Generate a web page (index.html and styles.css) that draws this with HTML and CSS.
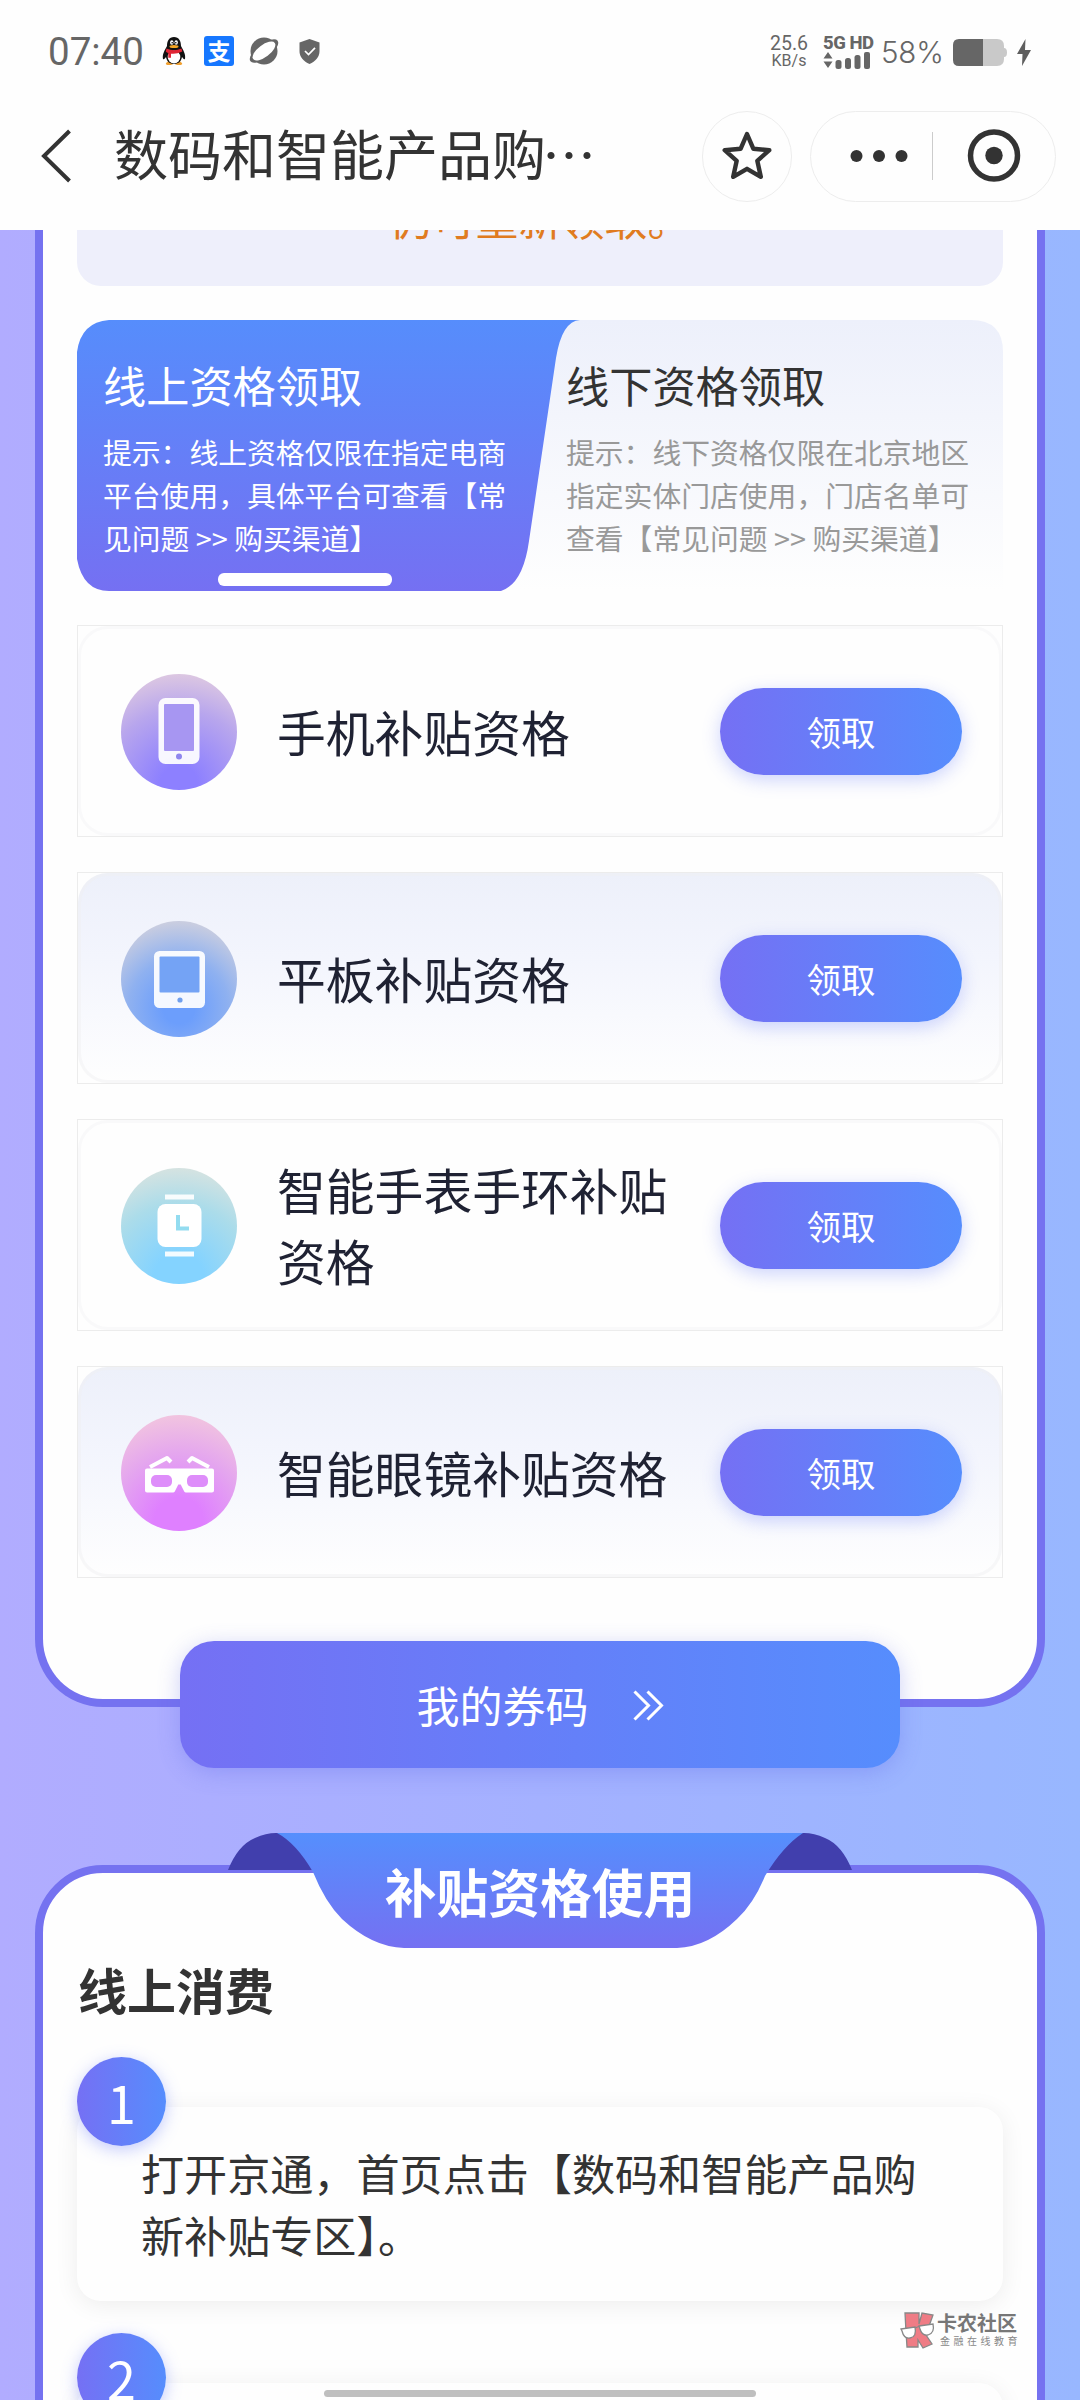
FILE: index.html
```html
<!DOCTYPE html>
<html lang="zh-CN">
<head>
<meta charset="utf-8">
<title>数码和智能产品购新补贴专区</title>
<link rel="stylesheet" href="styles.css">
</head>
<body>
<div class="phone">
  <header class="top">
    <div class="status">
      <span class="clock">07:40</span>
      <svg class="qq" width="26" height="30" viewBox="0 0 26 30">
        <path d="M5 27q-1 2 3 2t5-2q1 2 5 2t3-2l-4-3H9z" fill="#f0a030"/>
        <path d="M13 1c-5 0-7 4-7 9-2 4-5 8-4 13 1 1 2-1 3-2 1 5 4 7 8 7s7-2 8-7c1 1 2 3 3 2 1-5-2-9-4-13 0-5-2-9-7-9z" fill="#111"/>
        <ellipse cx="13" cy="21" rx="6.3" ry="6.5" fill="#fff"/>
        <ellipse cx="10.8" cy="6.5" rx="1.7" ry="2.3" fill="#fff"/><ellipse cx="15.2" cy="6.5" rx="1.7" ry="2.3" fill="#fff"/>
        <circle cx="11.2" cy="6.8" r=".8"/><circle cx="14.8" cy="6.8" r=".8"/>
        <ellipse cx="13" cy="10.6" rx="4.5" ry="1.5" fill="#f5a623"/>
        <path d="M5.5 12.500q7.500 3.500 15 0l.8 3q-6 3-11.300 2.200v4H7.300v-4.600q-1.500-.600-2.500-1.600z" fill="#e02535"/>
      </svg>
      <span class="alipay">支</span>
      <svg class="planet" width="30" height="30" viewBox="0 0 30 30">
        <circle cx="15" cy="15" r="13.500" fill="#666"/>
        <ellipse cx="15" cy="15" rx="17" ry="7" transform="rotate(-37 15 15)" fill="#666"/>
        <ellipse cx="15" cy="15" rx="13.500" ry="6" transform="rotate(-37 15 15)" fill="#fff"/>
      </svg>
      <svg class="shield" width="21" height="25" viewBox="0 0 21 25">
        <path d="M10.500 0l10 3.500V12c0 6-4 10.500-10 13-6-2.500-10-7-10-13V3.500z" fill="#666"/>
        <path d="M6 12l3.500 3.500L16 8.800" fill="none" stroke="#fff" stroke-width="1.700"/>
      </svg>
      <span class="grow"></span>
      <span class="speed"><b>25.6</b><i>KB/s</i></span>
      <span class="net"><b>5G HD</b>
        <svg width="48" height="17" viewBox="0 0 48 17" fill="#666">
          <path d="M5 0l4.500 6.500h-9zM5 16l4.500-6.500h-9z"/>
          <rect x="12.500" y="8" width="6" height="9" rx="2.500"/><rect x="22" y="6" width="6" height="11" rx="2.500"/><rect x="31.500" y="3" width="6" height="14" rx="2.500"/><rect x="41" y="0" width="6" height="17" rx="2"/>
        </svg>
      </span>
      <span class="percent">58%</span>
      <svg class="battery" width="54" height="27" viewBox="0 0 54 27">
        <path d="M6 0h38q7 0 7 7v2q3 0 3 4.500t-3 4.500v2q0 7-7 7H6z" fill="#c9c9c9"/>
        <path d="M6 0h24v27H6q-6 0-6-6V6q0-6 6-6z" fill="#666"/>
      </svg>
      <svg width="14" height="27" viewBox="0 0 14 27"><path d="M8.500 0L0 15h5.500L5 27 14 11H8z" fill="#5e5e5e"/></svg>
    </div>
    <nav class="nav">
      <svg class="back" width="32" height="54" viewBox="0 0 32 54"><path d="M29.500 2L4 27l25.500 25" fill="none" stroke="#333" stroke-width="4"/></svg>
      <h1>数码和智能产品购<span class="more">…</span></h1>
      <span class="fav">
        <svg width="54" height="54" viewBox="0 0 54 54"><path d="M27 5l6.300 14.700 16 1.500-12 10.600 3.500 16L27 39.800l-13.800 8 3.500-16-12-10.600 16-1.500z" fill="none" stroke="#333" stroke-width="4.400" stroke-linejoin="round"/></svg>
      </span>
      <span class="capsule">
        <svg width="246" height="90" viewBox="0 0 246 90" fill="#333">
          <circle cx="46.500" cy="45" r="6"/><circle cx="69" cy="45" r="6"/><circle cx="91.500" cy="45" r="6"/>
          <path d="M122.500 21v48" stroke="#ccc"/>
          <circle cx="184" cy="44.500" r="23.500" fill="none" stroke="#333" stroke-width="5.500"/><circle cx="184" cy="44.500" r="8.700"/>
        </svg>
      </span>
    </nav>
  </header>

  <main class="page">
    <section class="panel claim">
      <div class="notice">仍可重新领取。</div>
      <div class="tabs">
        <svg class="tab-shape" width="926" height="271" viewBox="0 0 926 271">
          <defs>
            <linearGradient id="tabOn" x2="0" y2="1"><stop stop-color="#568dfc"/><stop offset="1" stop-color="#7570f2"/></linearGradient>
            <linearGradient id="tabOff" x2="0" y2="1"><stop stop-color="#edf0fb"/><stop offset="1" stop-color="#fefefe"/></linearGradient>
          </defs>
          <path d="M420 0h474q32 0 32 32v239H420z" fill="url(#tabOff)"/>
          <path d="M32 0h471Q485 1 479 38L452 221q-6 43-28 50H32q-26 0-32-32V32Q4 2 32 0z" fill="url(#tabOn)"/>
        </svg>
        <div class="tab tab-on">
          <h2>线上资格领取</h2>
          <p>提示：线上资格仅限在指定电商平台使用，具体平台可查看【常见问题 &gt;&gt; 购买渠道】</p>
          <span class="tab-bar"></span>
        </div>
        <div class="tab">
          <h2>线下资格领取</h2>
          <p>提示：线下资格仅限在北京地区指定实体门店使用，门店名单可查看【常见问题 &gt;&gt; 购买渠道】</p>
        </div>
      </div>

      <div class="rows">
        <div class="row"><div class="row-in">
          <span class="ico phone-ico"><svg width="116" height="116" viewBox="0 0 116 116"><rect x="37.500" y="24" width="41" height="66" rx="7" fill="#fff" opacity=".93"/><rect x="43" y="30" width="30" height="47" rx="1" fill="#a796f2"/><circle cx="58" cy="82.500" r="3" fill="#8f86ee"/></svg></span>
          <span class="name">手机补贴资格</span><button>领取</button>
        </div></div>
        <div class="row tint"><div class="row-in">
          <span class="ico pad-ico"><svg width="116" height="116" viewBox="0 0 116 116"><rect x="33" y="30" width="51" height="57" rx="5.500" fill="#fff" opacity=".93"/><rect x="38.500" y="35.500" width="40" height="36" rx="1" fill="#74a3f5"/><circle cx="59" cy="79" r="2.600" fill="#709fed"/></svg></span>
          <span class="name">平板补贴资格</span><button>领取</button>
        </div></div>
        <div class="row"><div class="row-in">
          <span class="ico watch-ico"><svg width="116" height="116" viewBox="0 0 116 116"><path d="M44 26.500h29v5H44zM44 83.500h29v5H44z" fill="#fff" opacity=".9"/><rect x="36.500" y="36" width="44" height="43" rx="8" fill="#fff"/><path d="M57 47v13.500h11" fill="none" stroke="#93dcf0" stroke-width="4"/></svg></span>
          <span class="name">智能手表手环补贴资格</span><button>领取</button>
        </div></div>
        <div class="row tint"><div class="row-in">
          <span class="ico glass-ico"><svg width="116" height="116" viewBox="0 0 116 116" fill="none" stroke="#fff" stroke-width="4" stroke-linejoin="round"><path d="M26 55.500v20h26l4-8h5l4 8h26v-20z" fill="#fff"/><rect x="30" y="60" width="21" height="12" rx="5" fill="#de8dfa" stroke="none"/><rect x="66" y="60" width="21" height="12" rx="5" fill="#de8dfa" stroke="none"/><path d="M29 52l17-9 4 4M88 52l-17-9-4 4" stroke-width="4"/></svg></span>
          <span class="name">智能眼镜补贴资格</span><button>领取</button>
        </div></div>
      </div>
      <a class="coupon">我的券码
        <svg width="31" height="31" viewBox="0 0 31 31"><path d="M1.500 1.500l14 14-14 14M14.500 1.500l14 14-14 14" fill="none" stroke="#fff" stroke-width="3"/></svg>
      </a>
    </section>

    <section class="panel use">
      <div class="ribbon">
        <svg width="624" height="115" viewBox="0 0 624 115">
          <defs><linearGradient id="rib" x2="0" y2="1"><stop stop-color="#558ffd"/><stop offset="1" stop-color="#7570f2"/></linearGradient></defs>
          <path d="M0 37Q10 12 27 5 38 0 48 0h20l28 37zM624 37Q614 12 597 5 586 0 576 0h-20l-28 37z" fill="#413fad"/>
          <path d="M49 0h526q-20 13-38 43-11 27-28 43-29 28-60 29H176q-32-1-62-29Q97 69 85 39 68 10 49 0z" fill="url(#rib)"/>
        </svg>
        <h2>补贴资格使用</h2>
      </div>
      <h3>线上消费</h3>
      <div class="step"><span class="num">1</span><p>打开京通，首页点击【数码和智能产品购新补贴专区】。</p></div>
      <div class="step"><span class="num">2</span><p></p></div>
    </section>
  </main>

  <div class="mark">
    <svg width="35" height="36" viewBox="0 0 35 36" stroke="#888" stroke-width="1.300">
      <path d="M5 1h14v11L22 1l11 2-5 14-4 3 8 12-9 4-5-8v7H7L6 20z" fill="#ef7c85"/>
      <path d="M1 17l14-2q2 10-5 11-6 1-8-7zM19 14l14-2q2 9-5 11-6 1-8-6z" fill="#fff"/><path d="M15 16l5-2" fill="none"/>
    </svg>
    <span><b>卡农社区</b><i>金融在线教育</i></span>
  </div>
  <div class="home"></div>
</div>
</body>
</html>
```
FILE: styles.css
```css
* { box-sizing: border-box; }
body, h1, h2, h3, p { margin: 0; font-weight: 400; }
i { font-style: normal; }
svg { display: block; flex: none; overflow: visible; }
body { font-family: "Noto Sans CJK SC", sans-serif; color: #333; }

.phone {
  position: relative;
  width: 1080px;
  height: 2400px;
  overflow: hidden;
  display: flex;
  flex-direction: column;
  background: linear-gradient(90deg, #b1acff, #a4b1ff 50%, #98b7ff);
}

/* status bar and title bar */
.top { height: 230px; flex: none; background: #fefefe; }
.status {
  height: 102px;
  padding: 0 49px 0 48px;
  display: flex;
  align-items: center;
  color: #666;
  font-family: Roboto, sans-serif;
}
.clock { width: 113px; font-size: 38.500px; }
.qq { width: 26px; margin-right: 17px; }
.alipay {
  width: 30px; height: 30px; margin-right: 15px;
  border-radius: 3px; background: #1677ff; color: #fff;
  font: 700 23px/29px "Noto Sans CJK SC", sans-serif; text-align: center;
}
.planet { margin-right: 20px; }
.grow { flex: 1; }
.speed { width: 38px; margin-right: 15px; display: flex; flex-direction: column; align-items: center; }
.speed b { font: 400 19.500px/20px Roboto, sans-serif; }
.speed i { font: 400 16px/14px Roboto, sans-serif; }
.net { width: 48px; margin-right: 10px; }
.net b { display: block; font: 800 18.500px/18px Roboto, sans-serif; white-space: nowrap; transform-origin: 0 50%; letter-spacing: -.5px; }
.percent { width: 63px; margin-right: 9px; font: 300 29.500px/34px Inter, sans-serif; padding-top: 2px; letter-spacing: -.2px; }
.battery { margin-right: 10px; }
.status > svg:nth-last-child(-n+2) { margin-top: 3px; }

.nav { height: 108px; padding: 0 24px 0 40px; display: flex; align-items: center; }
.back { margin-right: 42px; }
.nav h1 { flex: 1; margin-top: -6px; font-size: 54px; line-height: 80px; white-space: nowrap; }
.more { margin-left: -4px; }
.fav, .capsule { height: 91px; border: 1px solid #ededed; border-radius: 46px; display: flex; align-items: center; justify-content: center; }
.fav { width: 90px; margin-right: 18px; }
.capsule { width: 246px; }

/* panels */
.page { flex: 1; min-height: 0; overflow: hidden; }
.panel { display: flow-root; width: 1010px; margin: 0 auto; padding: 0 34px; border: 8px solid #7572f0; background: #fefefe; }
.claim { height: 1477px; border-top: 0; border-radius: 0 0 68px 68px; }
.notice {
  height: 136px; margin: -80px 0 34px; padding-top: 37px;
  border-radius: 0 0 24px 24px; background: #eeeffb;
  color: #e07b20; font-size: 43px; line-height: 60px; text-align: center;
}

.tabs { position: relative; height: 271px; display: flex; }
.tab-shape { position: absolute; inset: 0; }
.tab { position: relative; width: 463px; padding: 33px 0 0 26px; }
.tab p { width: 406px; margin-top: 15px; font-size: 28.800px; line-height: 43px; color: #999; }
.tab h2 { font-size: 43.200px; line-height: 62px; }
.tab-on h2, .tab-on p { color: #fff; }
.tab-bar { position: absolute; left: 141px; top: 253px; width: 174px; height: 13px; border-radius: 6px; background: #fff; }

.rows { margin-top: 34px; display: grid; grid-auto-rows: 212px; gap: 35px; }
.row { border: 1px solid #ececec; }
.row-in {
  height: 100%; padding: 0 37px 0 40px;
  border: 3px solid #f9f9fa; border-radius: 30px;
  display: flex; align-items: center;
}
.tint .row-in { background: linear-gradient(#edf0fa, #f3f5fd 40%, #fefefe) border-box; border-color: rgba(240, 240, 242, .45); }
.ico { width: 116px; height: 116px; flex: none; border-radius: 50%; margin-top: 2px; }
.phone-ico { background: radial-gradient(circle at 50% 95%, #8d80ff 15%, #b8a6ed 60%, #e8d2de 98%); }
.pad-ico { background: radial-gradient(circle at 50% 75%, #6c9efc 15%, #8fb1f0 48%, #c9cde0 82%); }
.watch-ico { background: radial-gradient(circle at 50% 95%, #84d3ff 20%, #abdcea 60%, #e3e5de 98%); }
.glass-ico { background: radial-gradient(circle at 50% 92%, #df80ff 20%, #e4a5ef 55%, #f4cbdc 95%); }
.name { flex: 1; margin: 0 -10px 0 40px; color: #1f2233; font-size: 48.800px; line-height: 71px; position: relative; top: -1px; }
.row button {
  width: 242px; height: 87px; flex: none; margin-left: 50px; padding: 0 0 1px;
  border: 0; border-radius: 44px; color: #fff; font: 34.500px/50px "Noto Sans CJK SC", sans-serif;
  background: linear-gradient(90deg, #7570f4, #568dfd);
  box-shadow: 0 5px 18px rgba(100, 120, 250, .32);
}

.coupon {
  width: 720px; height: 127px; margin: 63px auto 0; padding-bottom: 2px;
  display: flex; align-items: center; justify-content: center; gap: 44px;
  border-radius: 34px; color: #fff; font-size: 43px; line-height: 62px;
  background: linear-gradient(90deg, #7570f4, #568dfd);
  box-shadow: 0 5px 22px rgba(90, 100, 230, .3);
}
.coupon svg { margin-top: 4px; }

.use { height: 700px; margin-top: 158px; border-radius: 68px 68px 0 0; }
.ribbon { position: relative; width: 624px; height: 115px; margin: -40px auto 0; }
.ribbon h2 { position: absolute; inset: 0; padding-top: 20px; color: #fff; font-size: 51.750px; font-weight: 700; line-height: 76px; text-align: center; }
.use h3 { margin-top: 5px; padding-left: 1px; font-size: 49px; font-weight: 700; line-height: 72px; }
.step { position: relative; margin-top: 82px; height: 194px; padding: 34px 50px 0 64px; border-radius: 24px; background: #fefefe; box-shadow: 0 4px 24px rgba(0, 0, 0, .07); }
.step p { font-size: 43.100px; line-height: 62px; }
.num {
  position: absolute; left: 0; top: -50px; width: 89px; height: 89px; border-radius: 50%;
  color: #fff; font-size: 52px; line-height: 89px; text-align: center;
  background: linear-gradient(90deg, #7570f4, #568dfd);
  box-shadow: 0 4px 16px rgba(90, 110, 250, .35);
}

/* overlays */
.mark { position: absolute; left: 900px; top: 2312px; display: flex; gap: 2px; color: #777; }
.mark b { display: block; font-size: 20px; line-height: 22px; }
.mark i { display: block; margin-left: 3px; font-size: 10px; line-height: 14px; letter-spacing: 3.500px; white-space: nowrap; color: #888; }
.home { position: absolute; left: 324px; bottom: 3px; width: 432px; height: 7px; border-radius: 4px; background: #bfbfbf; }
```
